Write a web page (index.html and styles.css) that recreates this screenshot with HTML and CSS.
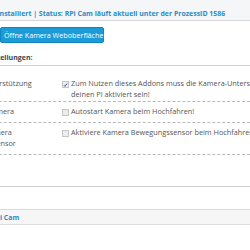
FILE: index.html
```html
<!DOCTYPE html>
<html>
<head>
<meta charset="utf-8">
<link rel="stylesheet" href="styles.css">
</head>
<body>
<div class="page">
  <div class="infobar">RPi Cam ist installiert | Status: RPi Cam läuft aktuell unter der ProzessID 1586</div>
  <div class="btnrow"><button class="btn">Öffne Kamera Weboberfläche</button></div>
  <div class="legend">Einstellungen:</div>
  <div class="form">
    <div class="row first">
      <div class="label">Kamera-Unterstützung</div>
      <div class="field">
        <span class="cb checked"><svg width="6" height="6" viewBox="0 0 6 6"><path d="M1 3.2 L2.4 4.6 L5 1.2" fill="none" stroke="#3a5f9a" stroke-width="1.2"/></svg></span>
        <span class="ftext">Zum Nutzen dieses Addons muss die Kamera-Unterstützung auf<br>deinen Pi aktiviert sein!</span>
      </div>
    </div>
    <div class="row">
      <div class="label">Autostart Kamera</div>
      <div class="field">
        <span class="cb"></span>
        <span class="ftext">Autostart Kamera beim Hochfahren!</span>
      </div>
    </div>
    <div class="row">
      <div class="label">Aktiviere Kamera<br>Bewegungssensor</div>
      <div class="field">
        <span class="cb"></span>
        <span class="ftext">Aktiviere Kamera Bewegungssensor beim Hochfahren</span>
      </div>
    </div>
  </div>
  <div class="endline"></div>
  <div class="footbar">RPi Cam</div>
</div>
</body>
</html>
```
FILE: styles.css
```css
html, body {
  margin: 0;
  padding: 0;
  background: #fff;
  overflow: hidden;
}
.page {
  width: 250px;
  font-family: "Open Sans", "DejaVu Sans", sans-serif;
  font-size: 7.3px;
  line-height: 11px;
  color: #555;
}
.infobar {
  margin-left: -43px;
  width: 400px;
  white-space: nowrap;
  background: #f5f6f7;
  border-bottom: 1px solid #d9d9d9;
  padding: 8px 0 1px 0;
  color: #2b8cc4;
  font-weight: 700;
  font-size: 6.95px;
}
.btnrow {
  padding-top: 6px;
}
.btn {
  display: block;
  font-family: inherit;
  font-size: 7.2px;
  line-height: 11px;
  color: #fff;
  background: #1b9bd7;
  border: 1px solid #1184bb;
  border-radius: 2px;
  padding: 2px 3px;
  height: 16px;
  width: 104px;
  text-align: left;
  white-space: nowrap;
}
.legend {
  margin-left: -17px;
  margin-top: 9px;
  font-weight: 700;
  font-size: 7px;
  color: #444;
  padding-bottom: 2px;
  border-bottom: 1px solid #d4d4d4;
  width: 280px;
}
.form {
  padding-top: 12px;
}
.row {
  display: flex;
  padding: 4px 0 5px 0;
  border-bottom: 1px dashed #b9b9b9;
  margin-left: -46px;
}
.row.first {
  padding-top: 0;
  padding-bottom: 1px;
}
.label {
  width: 108px;
  flex: none;
}
.field {
  display: flex;
  align-items: flex-start;
  white-space: nowrap;
}
.cb {
  flex: none;
  width: 5px;
  height: 5px;
  border: 1px solid #c5c5c5;
  background: #ececec;
  margin-top: 3px;
  margin-right: 2px;
  display: flex;
  align-items: center;
  justify-content: center;
}
.cb svg {
  display: block;
}
.endline {
  margin-top: 31px;
  border-top: 1px solid #cfcfcf;
  height: 0;
}
.footbar {
  margin-top: 22px;
  margin-left: -9px;
  width: 300px;
  background: #f6f6f6;
  border-top: 1px solid #dcdcdc;
  border-bottom: 1px solid #dcdcdc;
  padding: 2px 0 1px 0;
  color: #2b8cc4;
  font-weight: 700;
  font-size: 6.95px;
}
```
